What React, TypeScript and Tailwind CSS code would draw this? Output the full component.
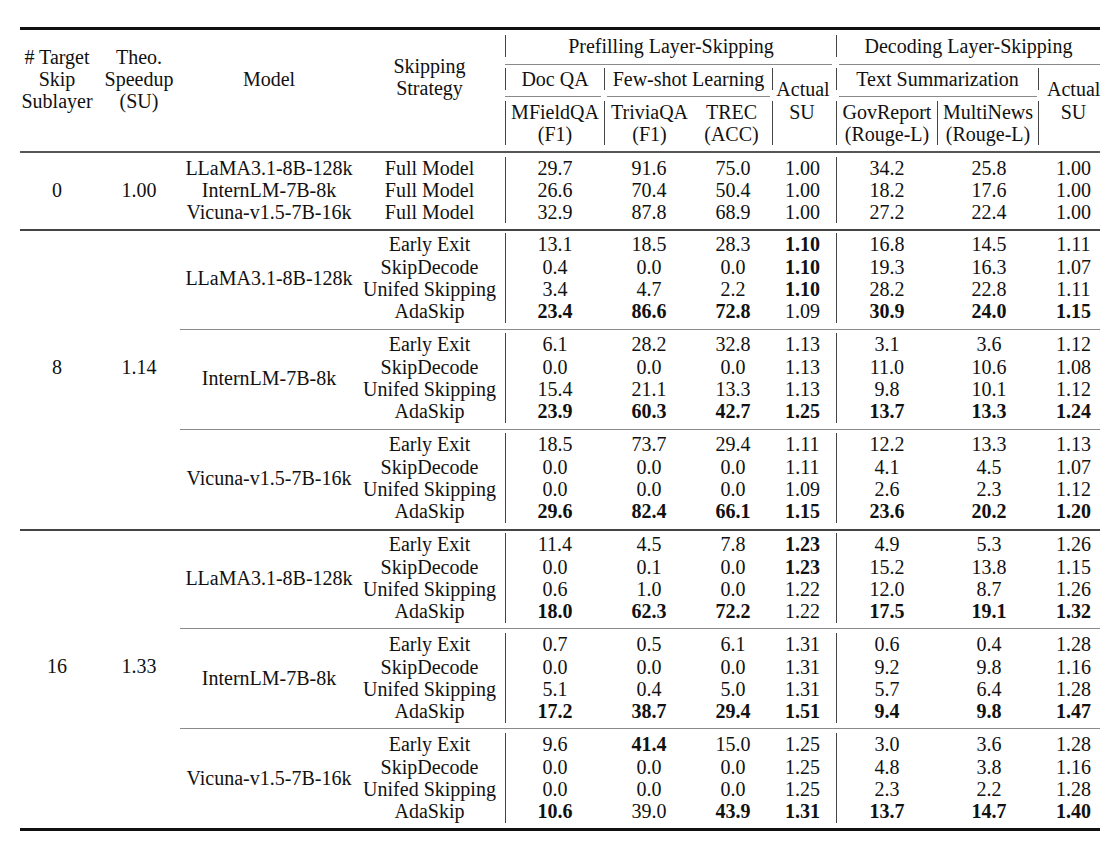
import React from "react";

type R = [string, string[]];

function Val({ v }: { v: string }) {
  const b = v.startsWith("*");
  return <div className={b ? "font-bold" : ""}>{b ? v.slice(1) : v}</div>;
}

function SubBlock({ models, rows, pad }: { models: string[]; rows: R[]; pad: string }) {
  const col = (i: number) => rows.map((r, k) => <Val key={k} v={r[1][i]} />);
  return (
    <div className={`flex ${pad}`}>
      {models.length === 1 ? (
        <div className="w-[170px] flex items-center justify-center whitespace-nowrap">{models[0]}</div>
      ) : (
        <div className="w-[170px] flex flex-col items-center whitespace-nowrap">
          {models.map((m) => (
            <div key={m}>{m}</div>
          ))}
        </div>
      )}
      <div className="w-[151px] flex flex-col items-center whitespace-nowrap">
        {rows.map((r, k) => (
          <div key={k}>{r[0]}</div>
        ))}
      </div>
      <div className="w-[99px] border-l border-[#444] text-center">{col(0)}</div>
      <div className="w-[87px] pl-[3px] text-center">{col(1)}</div>
      <div className="w-[82px] pl-[2px] text-center">{col(2)}</div>
      <div className="w-[63px] pr-[4px] text-center">{col(3)}</div>
      <div className="w-[101px] border-l border-[#444] text-center">{col(4)}</div>
      <div className="w-[102px] pl-[2px] text-center">{col(5)}</div>
      <div className="w-[61px] pl-[8px] text-center">{col(6)}</div>
    </div>
  );
}

const block0: R[] = [
  ["Full Model", ["29.7", "91.6", "75.0", "1.00", "34.2", "25.8", "1.00"]],
  ["Full Model", ["26.6", "70.4", "50.4", "1.00", "18.2", "17.6", "1.00"]],
  ["Full Model", ["32.9", "87.8", "68.9", "1.00", "27.2", "22.4", "1.00"]],
];

const g1: { model: string; pad: string; rows: R[] }[] = [
  {
    model: "LLaMA3.1-8B-128k",
    pad: "pt-[2.5px] pb-[6.8px]",
    rows: [
      ["Early Exit", ["13.1", "18.5", "28.3", "*1.10", "16.8", "14.5", "1.11"]],
      ["SkipDecode", ["0.4", "0.0", "0.0", "*1.10", "19.3", "16.3", "1.07"]],
      ["Unifed Skipping", ["3.4", "4.7", "2.2", "*1.10", "28.2", "22.8", "1.11"]],
      ["AdaSkip", ["*23.4", "*86.6", "*72.8", "1.09", "*30.9", "*24.0", "*1.15"]],
    ],
  },
  {
    model: "InternLM-7B-8k",
    pad: "pt-[3px] pb-[6.8px]",
    rows: [
      ["Early Exit", ["6.1", "28.2", "32.8", "1.13", "3.1", "3.6", "1.12"]],
      ["SkipDecode", ["0.0", "0.0", "0.0", "1.13", "11.0", "10.6", "1.08"]],
      ["Unifed Skipping", ["15.4", "21.1", "13.3", "1.13", "9.8", "10.1", "1.12"]],
      ["AdaSkip", ["*23.9", "*60.3", "*42.7", "*1.25", "*13.7", "*13.3", "*1.24"]],
    ],
  },
  {
    model: "Vicuna-v1.5-7B-16k",
    pad: "pt-[3px] pb-[6.3px]",
    rows: [
      ["Early Exit", ["18.5", "73.7", "29.4", "1.11", "12.2", "13.3", "1.13"]],
      ["SkipDecode", ["0.0", "0.0", "0.0", "1.11", "4.1", "4.5", "1.07"]],
      ["Unifed Skipping", ["0.0", "0.0", "0.0", "1.09", "2.6", "2.3", "1.12"]],
      ["AdaSkip", ["*29.6", "*82.4", "*66.1", "*1.15", "*23.6", "*20.2", "*1.20"]],
    ],
  },
];

const g2: { model: string; pad: string; rows: R[] }[] = [
  {
    model: "LLaMA3.1-8B-128k",
    pad: "pt-[2.5px] pb-[5.8px]",
    rows: [
      ["Early Exit", ["11.4", "4.5", "7.8", "*1.23", "4.9", "5.3", "1.26"]],
      ["SkipDecode", ["0.0", "0.1", "0.0", "*1.23", "15.2", "13.8", "1.15"]],
      ["Unifed Skipping", ["0.6", "1.0", "0.0", "1.22", "12.0", "8.7", "1.26"]],
      ["AdaSkip", ["*18.0", "*62.3", "*72.2", "1.22", "*17.5", "*19.1", "*1.32"]],
    ],
  },
  {
    model: "InternLM-7B-8k",
    pad: "pt-[4px] pb-[5.8px]",
    rows: [
      ["Early Exit", ["0.7", "0.5", "6.1", "1.31", "0.6", "0.4", "1.28"]],
      ["SkipDecode", ["0.0", "0.0", "0.0", "1.31", "9.2", "9.8", "1.16"]],
      ["Unifed Skipping", ["5.1", "0.4", "5.0", "1.31", "5.7", "6.4", "1.28"]],
      ["AdaSkip", ["*17.2", "*38.7", "*29.4", "*1.51", "*9.4", "*9.8", "*1.47"]],
    ],
  },
  {
    model: "Vicuna-v1.5-7B-16k",
    pad: "pt-[4px] pb-[5.3px]",
    rows: [
      ["Early Exit", ["9.6", "*41.4", "15.0", "1.25", "3.0", "3.6", "1.28"]],
      ["SkipDecode", ["0.0", "0.0", "0.0", "1.25", "4.8", "3.8", "1.16"]],
      ["Unifed Skipping", ["0.0", "0.0", "0.0", "1.25", "2.3", "2.2", "1.28"]],
      ["AdaSkip", ["*10.6", "39.0", "*43.9", "*1.31", "*13.7", "*14.7", "*1.40"]],
    ],
  },
];

function Group({ a, b, subs }: { a: string; b: string; subs: { model: string; pad: string; rows: R[] }[] }) {
  return (
    <div className="flex">
      <div className="w-[74px] flex items-center justify-center pb-[26px]">{a}</div>
      <div className="w-[90px] flex items-center justify-center pb-[26px]">{b}</div>
      <div className="w-[916px] flex flex-col">
        {subs.map((s, i) => (
          <React.Fragment key={i}>
            {i > 0 && <div className="h-px bg-[#8a8a8a] -ml-1" />}
            <SubBlock models={[s.model]} rows={s.rows} pad={s.pad} />
          </React.Fragment>
        ))}
      </div>
    </div>
  );
}

export default function App() {
  return (
    <div className="min-h-[842px] w-[1120px] bg-white text-[#111] text-[20px] leading-[22.3px] font-['Liberation_Serif','Times_New_Roman',serif] pt-[27px] pl-[20px]">
      <div className="w-[1080px]">
        <div className="h-[3px] bg-[#111]" />
        {/* header */}
        <div className="flex h-[121px] whitespace-nowrap">
          <div className="w-[74px] pt-[15.5px] text-center">
            <div># Target</div>
            <div>Skip</div>
            <div>Sublayer</div>
          </div>
          <div className="w-[90px] pt-[15.5px] text-center">
            <div>Theo.</div>
            <div>Speedup</div>
            <div>(SU)</div>
          </div>
          <div className="w-[170px] pt-[37.5px] text-center">Model</div>
          <div className="w-[151px] pt-[25px] text-center">
            <div>Skipping</div>
            <div>Strategy</div>
          </div>
          <div className="w-[595px] flex flex-col">
            <div className="h-[34px] flex items-start pt-[4.5px]">
              <div className="w-[331px] border-l border-[#444] text-center">Prefilling Layer-Skipping</div>
              <div className="w-[264px] border-l border-[#444] text-center">Decoding Layer-Skipping</div>
            </div>
            <div className="h-px flex">
              <div className="w-[327px] bg-[#8a8a8a]" />
              <div className="w-[7px]" />
              <div className="w-[261px] bg-[#8a8a8a]" />
            </div>
            <div className="h-[31px] flex items-start">
              <div className="w-[99px] mt-[2.5px] border-l border-[#444] text-center">Doc QA</div>
              <div className="w-[169px] mt-[2.5px] border-x border-[#444] text-center">Few-shot Learning</div>
              <div className="w-[63px] pt-[12.5px] pr-[3px] text-center">Actual</div>
              <div className="w-[203px] mt-[2.5px] border-x border-[#444] text-center">Text Summarization</div>
              <div className="w-[61px] pl-[8px] pt-[12.5px] text-center">Actual</div>
            </div>
            <div className="h-px flex">
              <div className="w-[96px] bg-[#8a8a8a]" />
              <div className="w-[6px]" />
              <div className="w-[163px] bg-[#8a8a8a]" />
              <div className="w-[69px]" />
              <div className="w-[198px] bg-[#8a8a8a]" />
            </div>
            <div className="h-[54px] flex items-start">
              <div className="w-[99px] mt-[3.5px] border-l border-[#444] text-center">
                <div>MFieldQA</div>
                <div>(F1)</div>
              </div>
              <div className="w-[87px] mt-[3.5px] pl-[3px] border-l border-[#444] text-center">
                <div>TriviaQA</div>
                <div>(F1)</div>
              </div>
              <div className="w-[82px] mt-[3.5px] border-r border-[#444] text-center">
                <div>TREC</div>
                <div>(ACC)</div>
              </div>
              <div className="w-[63px] mt-[3.5px] pr-[5px] text-center">SU</div>
              <div className="w-[101px] mt-[3.5px] border-l border-[#444] text-center">
                <div>GovReport</div>
                <div>(Rouge-L)</div>
              </div>
              <div className="w-[102px] mt-[3.5px] border-x border-[#444] text-center">
                <div>MultiNews</div>
                <div>(Rouge-L)</div>
              </div>
              <div className="w-[61px] mt-[3.5px] pl-[8px] text-center">SU</div>
            </div>
          </div>
        </div>
        <div className="h-[2px] bg-[#555]" />
        {/* block 0 */}
        <div className="flex">
          <div className="w-[74px] flex items-center justify-center pb-[2px]">0</div>
          <div className="w-[90px] flex items-center justify-center pb-[2px]">1.00</div>
          <div className="w-[916px]">
            <SubBlock
              models={["LLaMA3.1-8B-128k", "InternLM-7B-8k", "Vicuna-v1.5-7B-16k"]}
              rows={block0}
              pad="pt-[3.5px] pb-[5.6px]"
            />
          </div>
        </div>
        <div className="h-[2px] bg-[#444]" />
        <Group a="8" b="1.14" subs={g1} />
        <div className="h-[2px] bg-[#444]" />
        <Group a="16" b="1.33" subs={g2} />
        <div className="h-[3px] bg-[#111]" />
      </div>
    </div>
  );
}
